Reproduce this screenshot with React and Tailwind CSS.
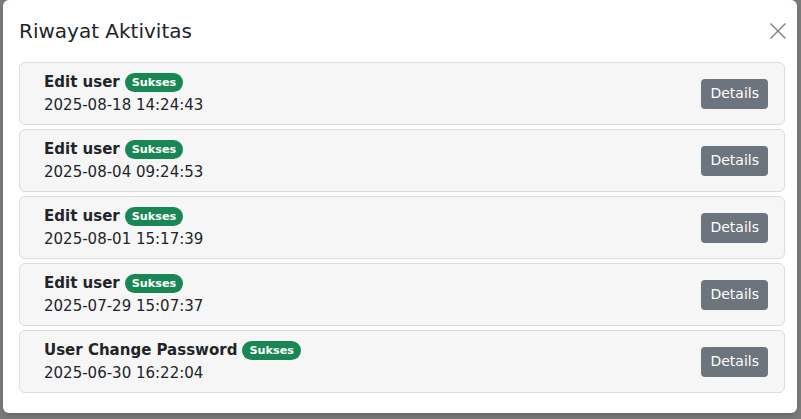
import React from "react";

const activities = [
  { action: "Edit user", time: "2025-08-18 14:24:43" },
  { action: "Edit user", time: "2025-08-04 09:24:53" },
  { action: "Edit user", time: "2025-08-01 15:17:39" },
  { action: "Edit user", time: "2025-07-29 15:07:37" },
  { action: "User Change Password", time: "2025-06-30 16:22:04" },
];

function CloseIcon() {
  return (
    <svg width="16" height="16" viewBox="0 0 16 16" className="text-[#7d7d7d]">
      <path d="M0.5 0.5 L15.5 15.5 M15.5 0.5 L0.5 15.5" stroke="currentColor" strokeWidth="1.4" fill="none" />
    </svg>
  );
}

export default function App() {
  return (
    <div
      className="w-full h-[419px] bg-[#7a7a7a] overflow-hidden text-[#212529]"
      style={{ fontFamily: '"DejaVu Sans", sans-serif' }}
    >
      <div className="ml-[3px] w-[794px] h-[413px] bg-white rounded-[6px] shadow-md flex flex-col">
        {/* Header */}
        <div className="flex items-center justify-between pl-4 pr-[11px] py-4">
          <h5 className="text-[20px] leading-[30px] font-normal">Riwayat Aktivitas</h5>
          <button className="w-4 h-4 flex items-center justify-center">
            <CloseIcon />
          </button>
        </div>

        {/* Body */}
        <div className="flex flex-col gap-1 pl-4 pr-[12px] pb-5">
          {activities.map((a, i) => (
            <div
              key={i}
              className="flex items-center justify-between bg-[#f6f6f6] border border-[#dcdcdc] rounded-[6px] pl-6 pr-4 py-2 text-[15px] leading-[22.5px]"
            >
              <div className="flex flex-col">
                <div className="flex items-center gap-[5px]">
                  <span className="font-bold">{a.action}</span>
                  <span className="h-[19px] px-[7px] flex items-center rounded-full bg-[#198754] text-white text-[11.25px] font-bold leading-none">
                    Sukses
                  </span>
                </div>
                <div>{a.time}</div>
              </div>
              <button className="h-[30px] px-[9px] rounded-[4px] bg-[#6c757d] text-white text-[14px] leading-[21px]">
                Details
              </button>
            </div>
          ))}
        </div>
      </div>
    </div>
  );
}
